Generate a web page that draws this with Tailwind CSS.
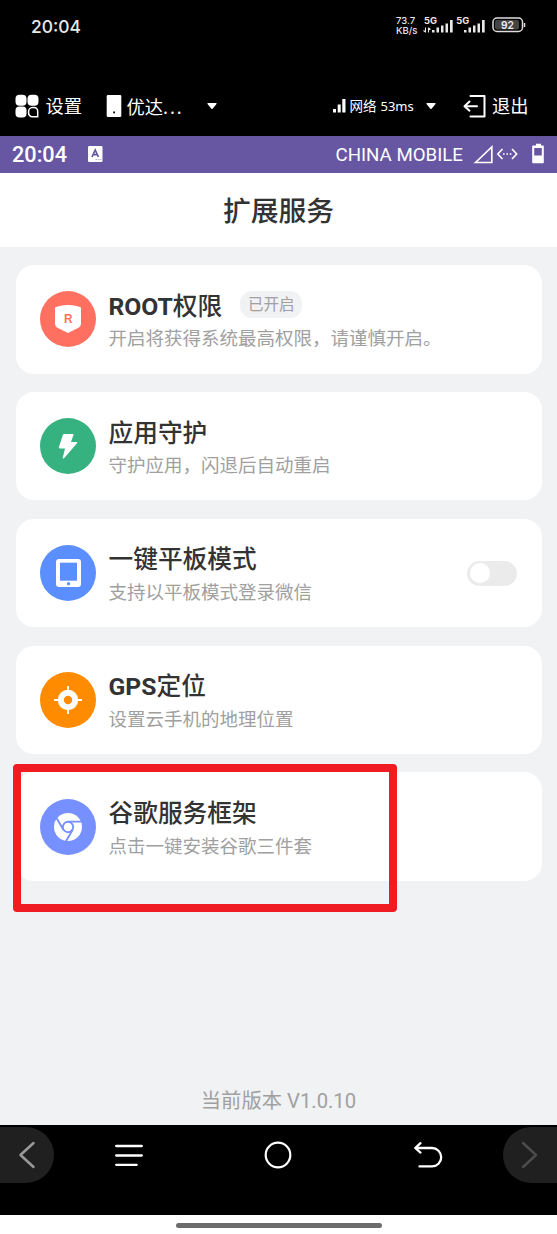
<!DOCTYPE html>
<html lang="zh-CN">
<head>
<meta charset="utf-8">
<title>扩展服务</title>
<script src="https://cdn.jsdelivr.net/npm/@tailwindcss/browser@4"></script>
</head>
<body class="w-[557px] h-[1234px] overflow-hidden bg-white font-['Roboto','Noto_Sans_CJK_SC',sans-serif]">
<div class="relative flex h-[1234px] w-[557px] flex-col whitespace-nowrap">

  <!-- Host phone status bar and toolbar -->
  <header class="flex h-[135.5px] shrink-0 flex-col bg-black text-white">
    <div class="flex h-[51px] items-center pl-[31px] text-[#e8e8e8]">
      <span class="w-[365px] pt-[2px] font-['Inter'] text-[17.400px] font-medium leading-none">20:04</span>
      <div class="flex w-[27px] flex-col pt-[1px] font-['Inter'] text-[9.500px] font-medium leading-[9.500px]">
        <span>73.7</span><span>KB/s</span>
      </div>
      <svg class="h-[20px] w-[68px]" viewBox="0 0 68 20" fill="currentColor">
        <text x="1" y="9" font-family="Inter" font-size="9" font-weight="700" textLength="13" lengthAdjust="spacingAndGlyphs">5G</text>
        <path d="M2.500 12.500v5M5.500 12.500v5M.5 15.500l2 1.500M7.500 14.500l-2-1.500" stroke="currentColor" stroke-width="1.100"/>
        <path d="M9 15h2.500v2.500H9zM13.500 12.500H16v5h-2.500zM18 10.500h2.500v7H18zM22.500 8.500H25v9h-2.500zM27 5h2.700v12.500H27z"/>
        <text x="33.300" y="9" font-family="Inter" font-size="9" font-weight="700" textLength="13" lengthAdjust="spacingAndGlyphs">5G</text>
        <path d="M41 15h2.500v2.500H41zM45.500 12.500H48v5h-2.500zM50 10.500h2.500v7H50zM54.500 8.500H57v9h-2.500zM59 5h2.700v12.500H59z"/>
      </svg>
      <svg class="h-[18px] w-[36px]" viewBox="0 0 36 18">
        <rect x="2" y="2" width="29.500" height="13.500" rx="4" fill="none" stroke="#ddd" stroke-width="1.500"/>
        <rect x="4" y="4" width="24" height="9.500" rx="2" fill="#444"/>
        <path d="M33.500 7v4" stroke="#ddd" stroke-width="1.500"/>
        <text x="16.500" y="12.700" text-anchor="middle" font-family="Inter" font-size="11" font-weight="600" textLength="13" lengthAdjust="spacingAndGlyphs" fill="#eee">92</text>
      </svg>
    </div>
    <div class="mt-[25px] flex h-[60px] items-center pl-[15px]">
      <svg class="h-[24px] w-[24px]" viewBox="0 0 24 24" fill="currentColor">
        <rect x=".5" y=".8" width="11" height="11" rx="4"/>
        <rect x="12.500" y=".8" width="11" height="11" rx="4"/>
        <rect x=".5" y="12.500" width="11" height="11" rx="4"/>
        <path d="M17.500 13.500h1.500a3.700 3.700 0 0 1 3.700 3.700v5.500h-5.500a3.600 3.600 0 0 1-3.600-3.600v-1.600a4 4 0 0 1 3.900-4z" fill="none" stroke="currentColor" stroke-width="1.500"/>
      </svg>
      <span class="ml-[6.500px] w-[60.500px] pt-[4px] text-[18.300px] leading-none">设置</span>
      <svg class="h-[24px] w-[16px]" viewBox="0 0 16 24"><rect x=".7" y="1" width="14.600" height="22" rx="1.200" fill="#fff"/><rect x="7.200" y="17.500" width="1.800" height="1.800" fill="#000"/></svg>
      <span class="ml-[4.500px] w-[79.500px] pt-[4px] text-[18.300px] leading-none">优达<span class="font-['Noto_Sans'] tracking-[2px]">...</span></span>
      <svg class="h-[8px] w-[12px]" viewBox="0 0 12 8"><path d="M2 1h8a.7.7 0 0 1 .5 1L6.600 6.700a.8.8 0 0 1-1.200 0L1.500 2A.7.7 0 0 1 2 1z" fill="#fff"/></svg>
      <svg class="ml-[115px] h-[14px] w-[13px]" viewBox="0 0 13 14" fill="#fff"><path d="M0 10h3v3.500H0zM4.700 5.500h3v8h-3zM9.300 0h3.200v13.500H9.300z"/></svg>
      <span class="ml-[3.500px] w-[75px] pt-[2px] text-[13.500px] leading-none">网络<span class="ml-[4px] font-['Noto_Sans'] text-[13px]">53ms</span></span>
      <svg class="h-[8px] w-[12px]" viewBox="0 0 12 8"><path d="M2 1h8a.7.7 0 0 1 .5 1L6.600 6.700a.8.8 0 0 1-1.200 0L1.500 2A.7.7 0 0 1 2 1z" fill="#fff"/></svg>
      <svg class="ml-[26px] h-[24px] w-[23px]" viewBox="0 0 23 24" fill="none" stroke="#fff" stroke-width="2" stroke-linejoin="round" stroke-linecap="round"><path d="M7.500 2H21.500V22.500H7.500M14 12.200H1.800M6.500 7.500L1.500 12.200l5 4.500"/></svg>
      <span class="ml-[6.500px] pt-[4px] text-[18.300px] leading-none">退出</span>
    </div>
  </header>

  <!-- Cloud phone status bar -->
  <div class="flex h-[37px] shrink-0 items-center bg-[#6757a3] pl-[12px] text-white">
    <span class="w-[76px] pt-[2px] text-[21.700px] font-medium leading-none">20:04</span>
    <svg class="h-[16px] w-[15px]" viewBox="0 0 15 16"><rect width="14.500" height="16" rx="1.200" fill="#fff"/><path d="M4 11L7.200 4l3.200 7M5.200 8.700h4" fill="none" stroke="#6757a3" stroke-width="1.700"/><path d="M7.500 13.500h6" stroke="#b9b1d6" stroke-dasharray="1.500 .7"/></svg>
    <span class="ml-[232.500px] w-[135px] pt-[2px] text-[18.700px] leading-none">CHINA MOBILE</span>
    <svg class="h-[22px] w-[76px]" viewBox="0 0 76 22" fill="none" stroke="#fff" stroke-width="1.700">
      <path d="M4.500 19.500L20.800 4v15.500z"/>
      <path d="M31.500 6l-4.700 5 4.700 5M41 6l4.700 5-4.700 5" stroke-width="1.600"/>
      <path d="M32 11h9" stroke-width="1.600" stroke-dasharray="1.600 1.800"/>
      <path d="M63 2.500h2V.7h5v1.800h2a.8.8 0 0 1 .8.8V19.500a.8.8 0 0 1-.8.8H62a.8.8 0 0 1-.8-.8V3.300a.8.8 0 0 1 .8-.8zM63.200 5v7.500h7.600V5z" fill="#fff" fill-rule="evenodd" stroke="none"/>
    </svg>
  </div>

  <h1 class="flex h-[74px] shrink-0 items-center justify-center bg-white pt-[4px] text-[27.800px] font-medium leading-none text-[#333]">扩展服务</h1>

  <main class="flex h-[878.500px] shrink-0 flex-col gap-[18.300px] bg-[#f1f2f4] pl-[15.500px] pt-[18.700px]">
    <section class="flex h-[108.500px] w-[526px] shrink-0 items-center rounded-[18px] bg-white pl-[24.500px]">
      <svg class="h-[56px] w-[56px]" viewBox="0 0 56 56"><circle cx="28" cy="28" r="28" fill="#ff7061"/><path d="M28 14c5 0 10 1 13 2.600V32.500c0 2-1 3.300-2.500 4.300L28 42l-10.500-5.200C16 35.800 15 34.500 15 32.500V16.600C18 15 23 14 28 14z" fill="#fff"/><text x="28.200" y="31.600" text-anchor="middle" font-family="Liberation Sans" font-size="13" font-weight="700" textLength="8.500" lengthAdjust="spacingAndGlyphs" fill="#ff7061">R</text></svg>
      <div class="ml-[12.500px] flex flex-col">
        <div class="flex h-[33px] items-center">
          <h2 class="flex pt-[7px] text-[24.700px] font-medium leading-none text-[#333]"><span class="font-bold">ROOT</span><span>权限</span></h2>
          <span class="ml-[18px] flex h-[27px] w-[62px] items-center justify-center rounded-[12px] bg-[#f1f2f4] pt-[2px] text-[15.500px] leading-none text-[#a0a0a0] mt-[3px]">已开启</span>
        </div>
        <p class="flex h-[32px] items-center pt-[7.500px] text-[18.500px] leading-none text-[#a0a0a0]">开启将获得系统最高权限，请谨慎开启。</p>
      </div>
    </section>

    <section class="flex h-[108.500px] w-[526px] shrink-0 items-center rounded-[18px] bg-white pl-[24.500px]">
      <svg class="h-[56px] w-[56px]" viewBox="0 0 56 56"><circle cx="28" cy="28" r="28" fill="#36b180"/><path d="M24.500 16h9.300l-2.800 8h5.500c.8 0 1 .6.500 1.200L24.300 40c-.8.900-1.800.5-1.500-.6L25 30.500h-5.300c-.8 0-1.100-.5-.9-1.200l4-12c.3-.9.800-1.300 1.700-1.300z" fill="#fff"/></svg>
      <div class="ml-[12.500px] flex flex-col">
        <h2 class="flex h-[33px] items-center pt-[7.500px] text-[24.700px] font-medium leading-none text-[#333]">应用守护</h2>
        <p class="flex h-[32px] items-center pt-[7.500px] text-[18.500px] leading-none text-[#a0a0a0]">守护应用，闪退后自动重启</p>
      </div>
    </section>

    <section class="flex h-[108.500px] w-[526px] shrink-0 items-center rounded-[18px] bg-white pl-[24.500px]">
      <svg class="h-[56px] w-[56px]" viewBox="0 0 56 56"><circle cx="28" cy="28" r="28" fill="#5b8fff"/><rect x="16" y="14" width="25" height="28" rx="3" fill="#fff"/><rect x="20" y="17.700" width="17" height="18" fill="#5b8fff"/><circle cx="28.500" cy="38.700" r="1.600" fill="#5b8fff"/></svg>
      <div class="ml-[12.500px] flex w-[358.500px] flex-col">
        <h2 class="flex h-[33px] items-center pt-[7.500px] text-[24.700px] font-medium leading-none text-[#333]">一键平板模式</h2>
        <p class="flex h-[32px] items-center pt-[7.500px] text-[18.500px] leading-none text-[#a0a0a0]">支持以平板模式登录微信</p>
      </div>
      <div class="flex h-[25px] w-[50px] items-center rounded-full bg-[#ebebeb] pl-[2.500px]"><div class="size-[20.500px] rounded-full bg-white"></div></div>
    </section>

    <section class="flex h-[108.500px] w-[526px] shrink-0 items-center rounded-[18px] bg-white pl-[24.500px]">
      <svg class="h-[56px] w-[56px]" viewBox="0 0 56 56"><circle cx="28" cy="28" r="28" fill="#ff8b00"/><circle cx="28" cy="28" r="7.200" fill="none" stroke="#fff" stroke-width="6"/><path d="M28 14v5M28 37v5M14 28h5M37 28h5" stroke="#fff" stroke-width="1.800"/></svg>
      <div class="ml-[12.500px] flex flex-col">
        <h2 class="flex h-[33px] items-center pt-[7.500px] text-[24.700px] font-medium leading-none text-[#333]"><span class="font-bold">GPS</span><span>定位</span></h2>
        <p class="flex h-[32px] items-center pt-[7.500px] text-[18.500px] leading-none text-[#a0a0a0]">设置云手机的地理位置</p>
      </div>
    </section>

    <section class="flex h-[108.500px] w-[526px] shrink-0 items-center rounded-[18px] bg-white pl-[24.500px]">
      <svg class="h-[56px] w-[56px]" viewBox="0 0 56 56"><circle cx="28" cy="28" r="28" fill="#7790ff"/><circle cx="28" cy="28" r="14" fill="#fff"/><g fill="none" stroke="#7790ff" stroke-width="1.900"><circle cx="28" cy="28" r="5.200"/><path d="M28 22.600H42M23.300 30.700L16.300 18.600M32.700 30.700L25.700 42.800"/></g></svg>
      <div class="ml-[12.500px] flex flex-col">
        <h2 class="flex h-[33px] items-center pt-[7.500px] text-[24.700px] font-medium leading-none text-[#333]">谷歌服务框架</h2>
        <p class="flex h-[32px] items-center pt-[7.500px] text-[18.500px] leading-none text-[#a0a0a0]">点击一键安装谷歌三件套</p>
      </div>
    </section>

    <p class="mt-[191.500px] pr-[15.500px] text-center text-[20.300px] leading-[20px] text-[#a0a0a0]">当前版本 V1.0.10</p>
  </main>

  <!-- Navigation controls -->
  <nav class="flex h-[90px] shrink-0 items-start bg-black pt-[2px]">
    <div class="flex h-[56px] w-[54px] items-center rounded-r-[28px] bg-[#202020] pl-[18px]">
      <svg class="h-[28px] w-[18px]" viewBox="0 0 18 28" fill="none" stroke="#999" stroke-width="2.500" stroke-linecap="round" stroke-linejoin="round"><path d="M15.500 2L2.500 14l13 12"/></svg>
    </div>
    <div class="flex flex-1 justify-between pl-[59.500px] pr-[60px]">
      <svg class="mt-[16px] h-[24px] w-[30px]" viewBox="0 0 30 24" stroke="#fff" stroke-width="2.300" stroke-linecap="round"><path d="M2.200 3h25.600M2.200 12.500h25.600M2.200 21.800h20.500"/></svg>
      <svg class="mt-[14px] h-[28px] w-[28px]" viewBox="0 0 28 28" fill="none" stroke="#fff" stroke-width="2.200"><circle cx="14" cy="14" r="12.300"/></svg>
      <svg class="mt-[14px] h-[28px] w-[30px]" viewBox="0 0 30 28" fill="none" stroke="#fff" stroke-width="2.300" stroke-linecap="round" stroke-linejoin="round"><path d="M7.500 2.200L2.200 7l5.300 4.600M2.500 7H19a9.200 9.200 0 0 1 0 18.400H6.500"/></svg>
    </div>
    <div class="flex h-[56px] w-[54px] items-center rounded-l-[28px] bg-[#202020] pl-[18px]">
      <svg class="h-[28px] w-[18px]" viewBox="0 0 18 28" fill="none" stroke="#4c4c4c" stroke-width="2.500" stroke-linecap="round" stroke-linejoin="round"><path d="M2 2l13 12L2 26"/></svg>
    </div>
  </nav>
  <div class="flex h-[19px] shrink-0 justify-center bg-white pt-[8px]"><div class="h-[5px] w-[206px] rounded-full bg-[#6c6c6c]"></div></div>

  <!-- Highlight frame over the Google services card -->
  <div class="absolute left-[13px] top-[764px] h-[148px] w-[384px] rounded-[4px] bg-[#ef1c24] [clip-path:polygon(evenodd,0_0,100%_0,100%_100%,0_100%,0_0,8px_8px,376px_8px,376px_140px,8px_140px,8px_8px)]"></div>
</div>
</body>
</html>
